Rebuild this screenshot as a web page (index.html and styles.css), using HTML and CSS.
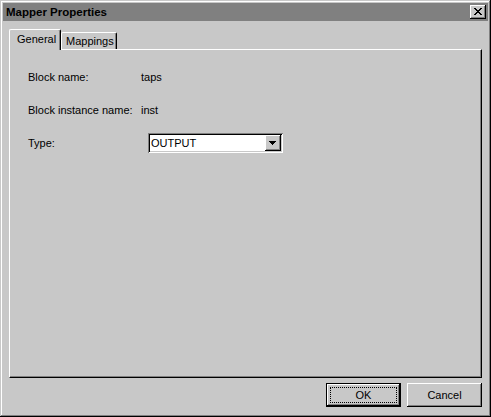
FILE: index.html
```html
<!DOCTYPE html>
<html>
<head>
    <title>Mapper Properties</title>
    <link rel="stylesheet" href="styles.css">
</head>
<body>
    <div class="window">
        <div class="titlebar">
            <span class="title">Mapper Properties</span>
            <button class="close">
                <svg width="8" height="7" viewBox="0 0 8 7"><path d="M0 0h2v1h-2z M6 0h2v1h-2z M1 1h2v1h-2z M5 1h2v1h-2z M2 2h4v1h-4z M3 3h2v1h-2z M2 4h4v1h-4z M1 5h2v1h-2z M5 5h2v1h-2z M0 6h2v1h-2z M6 6h2v1h-2z" fill="#000"/></svg>
            </button>
        </div>
        <div class="content">
            <div class="tabs">
                <div class="tab active">General</div>
                <div class="tab">Mappings</div>
            </div>
            <div class="panel">
                <div class="fields">
                    <div class="label">Block name:</div>
                    <div class="value">taps</div>
                    <div class="label">Block instance name:</div>
                    <div class="value">inst</div>
                    <div class="label">Type:</div>
                    <div class="value">
                        <div class="combo">
                            <span class="combo-text">OUTPUT</span>
                            <span class="drop">
                                <svg width="7" height="4" viewBox="0 0 7 4"><path d="M0 0h7v1h-7z M1 1h5v1h-5z M2 2h3v1h-3z M3 3h1v1h-1z" fill="#000"/></svg>
                            </span>
                        </div>
                    </div>
                </div>
            </div>
            <div class="buttons">
                <button class="btn default"><span class="focus">OK</span></button>
                <button class="btn">Cancel</button>
            </div>
        </div>
    </div>
</body>
</html>
```

FILE: styles.css
```css
body { margin: 0; background: #c8c8c8; font-family: "Liberation Sans", Arial, sans-serif; font-size: 11px; color: #000; }

/* outer dialog frame */
.window {
    width: 491px;
    height: 417px;
    box-sizing: border-box;
    padding: 3px;
    box-shadow: inset -1px -1px #000, inset 1px 1px #c8c8c8, inset -2px -2px #808080, inset 2px 2px #fff;
}
.titlebar {
    height: 18px;
    background: #808080;
    display: flex;
    align-items: center;
    justify-content: space-between;
    padding: 0 2px 0 3px;
}
.title { font-weight: bold; font-size: 11.5px; }
.close {
    width: 16px;
    height: 14px;
    padding: 0;
    border: 0;
    background: #c8c8c8;
    box-shadow: inset -1px -1px #000, inset 1px 1px #fff, inset -2px -2px #808080;
    display: flex;
    align-items: center;
    justify-content: center;
}
.close svg { display: block; margin: 0 1px 1px 0; }

.content { padding: 8px 6px 0; }

/* tabs */
.tabs { display: flex; align-items: flex-end; height: 20px; }
.tab {
    height: 17px;
    box-sizing: border-box;
    border-left: 1px solid #fff;
    border-top: 1px solid #fff;
    border-right: 1px solid #000;
    border-radius: 2px 2px 0 0;
    box-shadow: inset -1px 0 #808080;
    padding-left: 4px;
    line-height: 16px;
    width: 56px;
}
.tab.active {
    width: 52px;
    height: 21px;
    margin-bottom: -1px;
    position: relative;
    z-index: 1;
    background: #c8c8c8;
    padding-left: 7px;
    line-height: 18px;
}

.panel {
    height: 329px;
    box-sizing: border-box;
    border-top: 1px solid #fff;
    border-left: 1px solid #fff;
    border-right: 1px solid #000;
    border-bottom: 1px solid #000;
    box-shadow: inset -1px -1px #808080;
    padding: 17px 18px;
}
.fields {
    display: grid;
    grid-template-columns: 113px auto;
    grid-auto-rows: 20px;
    row-gap: 13px;
    align-items: center;
    justify-content: start;
}

/* combo box */
.combo {
    margin-left: 7px;
    width: 135px;
    height: 20px;
    box-sizing: border-box;
    background: #fff;
    box-shadow: inset 1px 1px #808080, inset -1px -1px #fff, inset 2px 2px #000, inset -2px -2px #c8c8c8;
    display: flex;
    align-items: center;
    padding: 2px 2px 2px 3px;
}
.drop {
    margin-left: auto;
    width: 16px;
    height: 16px;
    background: #c8c8c8;
    box-shadow: inset -1px -1px #000, inset 1px 1px #fff, inset -2px -2px #808080;
    display: flex;
    align-items: center;
    justify-content: center;
}
.drop svg { display: block; margin: 0 1px 1px 0; }

/* buttons */
.buttons { display: flex; justify-content: flex-end; gap: 6px; margin-top: 5px; }
.btn {
    width: 75px;
    height: 24px;
    padding: 0;
    border: 0;
    font: inherit;
    color: #000;
    background: #c8c8c8;
    box-shadow: inset -1px -1px #000, inset 1px 1px #fff, inset -2px -2px #808080;
}
.btn.default {
    box-shadow: inset 0 0 0 1px #000, inset -2px -2px #000, inset 2px 2px #fff, inset -3px -3px #808080;
}
.focus {
    display: flex;
    align-items: center;
    justify-content: center;
    height: 16px;
    margin: 0 4px;
    box-sizing: border-box;
    border: 1px dotted #000;
}
```
